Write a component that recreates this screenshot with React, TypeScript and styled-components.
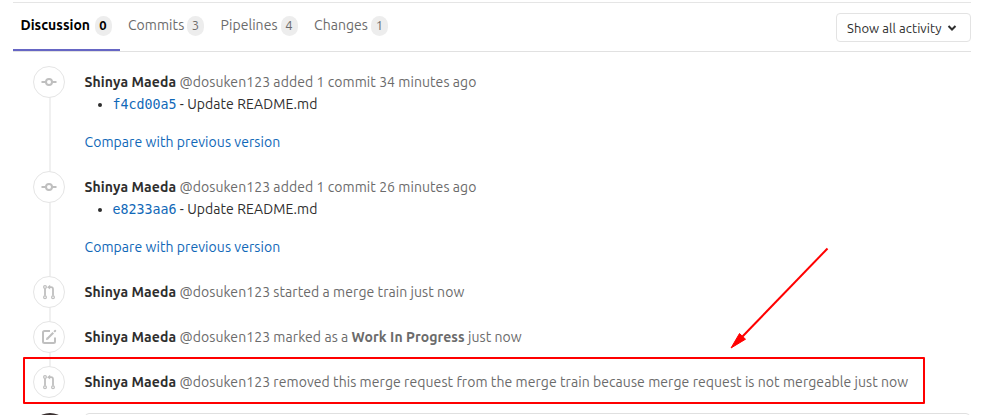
import React from "react";
import styled, { createGlobalStyle, css } from "styled-components";

const GlobalStyle = createGlobalStyle`
  * { box-sizing: border-box; }
  html, body { margin: 0; padding: 0; background: #fff; overflow: hidden; }
`;

const Page = styled.div`
  position: relative;
  width: 993px;
  height: 415px;
  padding: 2px 22px 0 13px;
  overflow: hidden;
  background: #fff;
  color: #2e2e2e;
  font: 14px/22px Ubuntu, "Noto Sans", sans-serif;
`;

const TabBar = styled.nav`
  display: flex;
  height: 50px;
  border-top: 1px solid #e5e5e5;
  border-bottom: 1px solid #e1e1e1;
`;

const Tab = styled.a<{ $active?: boolean; $width: number }>`
  display: flex;
  flex: none;
  align-items: center;
  justify-content: space-between;
  width: ${(p) => p.$width}px;
  height: 48px;
  padding: 0 8px 4px 8.5px;
  color: #6b6b6b;
  white-space: nowrap;
  ${(p) =>
    p.$active &&
    css`
      color: #000;
      font-weight: 700;
      border-bottom: 2px solid #6666c4;
      padding: 0 8px 2px 7.5px;
    `}
`;

const Label = styled.span<{ $spacing?: number }>`
  letter-spacing: ${(p) => p.$spacing ?? 0.068}px;
`;

const Badge = styled.span`
  flex: none;
  width: 17px;
  height: 20px;
  margin-top: 2px;
  border-radius: 10px;
  background: #ededed;
  font-size: 13px;
  line-height: 19px;
  text-align: center;
`;

const Filter = styled.button`
  display: flex;
  align-items: center;
  justify-content: space-between;
  width: 135px;
  height: 29px;
  margin: 10px 0 0 auto;
  padding: 0 13px 0 10px;
  border: 1px solid #e3e3e3;
  border-radius: 4px;
  background: #fff;
  color: #2e2e2e;
  font: 13px/20px Ubuntu, "Noto Sans", sans-serif;
  white-space: nowrap;
`;

const Timeline = styled.ul`
  position: relative;
  margin: 0;
  padding: 14px 0 0 20px;
  list-style: none;

  &::before {
    content: "";
    position: absolute;
    left: 36px;
    top: 20px;
    width: 2px;
    height: 310px;
    background: #f0f0f0;
  }
`;

const Note = styled.li<{ $tall?: boolean }>`
  position: relative;
  display: flex;
  gap: 19.5px;
  height: ${(p) => (p.$tall ? 105 : 45)}px;
`;

const Bullet = styled.div`
  display: flex;
  flex: none;
  align-items: center;
  justify-content: center;
  width: 32px;
  height: 32px;
  border: 1px solid #e5e5e5;
  border-radius: 50%;
  background: #fff;
`;

const Content = styled.div`
  padding-top: 5px;
  color: #6b6b6b;
  white-space: nowrap;
`;

const Author = styled.strong`
  color: #2e2e2e;
  letter-spacing: 0.11px;
`;

const Commits = styled.ul`
  margin: 0 0 16px;
  padding-left: 28px;
  color: #2e2e2e;
  list-style: disc;
`;

const Sha = styled.a`
  color: #1068b8;
  font: 13.3px/20px "DejaVu Sans Mono", monospace;
`;

const Link = styled.a`
  color: #1068b8;
`;

const Composer = styled.div`
  display: flex;
  gap: 15px;
  padding: 2px 1px 0 17px;
`;

const Avatar = styled.div`
  width: 40px;
  height: 40px;
  border-radius: 50%;
  background: #3a3030;
`;

const Editor = styled.div`
  flex: 1;
  height: 40px;
  border: 1px solid #e0e0e0;
  border-radius: 4px;
`;

const Highlight = styled.div`
  position: absolute;
  left: 23px;
  top: 357px;
  width: 902px;
  height: 47px;
  border: 2px solid #f00;
  border-radius: 1px;
`;

const Arrow = styled.svg`
  position: absolute;
  left: 720px;
  top: 240px;
`;

const CommitIcon = () => (
  <svg width="16" height="16" viewBox="0 0 16 16" fill="none" stroke="#bfbfbf" strokeWidth="2">
    <circle cx="8" cy="8" r="3" />
    <path d="M0.5 8H5M11 8h4.5" />
  </svg>
);

const MergeIcon = () => (
  <svg width="16" height="16" viewBox="0 0 16 16" fill="none" stroke="#bfbfbf">
    <g strokeWidth="1.2">
      <circle cx="4" cy="3" r="1.4" />
      <circle cx="4" cy="13.2" r="1.4" />
      <circle cx="12" cy="13.2" r="1.4" />
    </g>
    <path d="M4 4.4v7.4" strokeWidth="1.8" />
    <path d="M8.5 3.2h1.500c1.400 0 2 .8 2 2v6.600" strokeWidth="1.8" />
    <path d="M9.200 0.800v4.800L6 3.200z" fill="#bfbfbf" stroke="none" />
  </svg>
);

const EditIcon = () => (
  <svg width="16" height="16" viewBox="0 0 16 16" fill="none" stroke="#bfbfbf">
    <path d="M9 2H3.5Q2 2 2 3.5v9Q2 14 3.5 14h9q1.5 0 1.5-1.5V8.5" strokeWidth="2" />
    <path d="M6.3 9.7L12.3 3.7" strokeWidth="2" />
    <path d="M5 11l.5-2.4 1.9 1.9zM12.4 2.2l1.2-1.2q.6-.5 1.1 0l.3.3q.5.6 0 1.1l-1.2 1.2z" fill="#bfbfbf" stroke="none" />
  </svg>
);

const tabs = [
  { label: "Discussion", count: 0, width: 106.5, spacing: 0, active: true },
  { label: "Commits", count: 3, width: 92.5, spacing: 0.05 },
  { label: "Pipelines", count: 4, width: 93.5, spacing: 0.06 },
  { label: "Changes", count: 1, width: 90.5, spacing: 0.05 },
];

const commitNotes = [
  { sha: "f4cd00a5", time: "34 minutes ago" },
  { sha: "e8233aa6", time: "26 minutes ago" },
];

export default function App() {
  return (
    <>
      <GlobalStyle />
      <Page>
        <TabBar>
          {tabs.map((t) => (
            <Tab key={t.label} $active={t.active} $width={t.width}>
              <Label $spacing={t.spacing}>{t.label}</Label>
              <Badge>{t.count}</Badge>
            </Tab>
          ))}
          <Filter>
            <Label $spacing={0.08}>Show all activity</Label>
            <svg width="10" height="8" viewBox="0 0 10 8" fill="none" stroke="#2e2e2e" strokeWidth="2">
              <path d="M1.5 2L5 5.5 8.5 2" />
            </svg>
          </Filter>
        </TabBar>
        <Timeline>
          {commitNotes.map((n) => (
            <Note key={n.sha} $tall>
              <Bullet><CommitIcon /></Bullet>
              <Content>
                <Author>Shinya Maeda</Author> <Label>@dosuken123 added 1 commit {n.time}</Label>
                <Commits>
                  <li><Sha>{n.sha}</Sha> <Label>- Update README.md</Label></li>
                </Commits>
                <Link><Label>Compare with previous version</Label></Link>
              </Content>
            </Note>
          ))}
          <Note>
            <Bullet><MergeIcon /></Bullet>
            <Content>
              <Author>Shinya Maeda</Author> <Label>@dosuken123 started a merge train just now</Label>
            </Content>
          </Note>
          <Note>
            <Bullet><EditIcon /></Bullet>
            <Content>
              <Author>Shinya Maeda</Author> <Label>@dosuken123 marked as a <b>Work In Progress</b> just now</Label>
            </Content>
          </Note>
          <Note>
            <Bullet><MergeIcon /></Bullet>
            <Content>
              <Author>Shinya Maeda</Author> <Label>@dosuken123 removed this merge request from the merge train because merge request is not mergeable just now</Label>
            </Content>
          </Note>
        </Timeline>
        <Composer>
          <Avatar />
          <Editor />
        </Composer>
        <Highlight />
        <Arrow width="120" height="115" viewBox="0 0 120 115">
          <path d="M107.5 8.5L22 97" stroke="#f00" strokeWidth="2" fill="none" />
          <path d="M11 108L19.5 93.5 25.5 99.2z" fill="#f00" stroke="#f00" />
        </Arrow>
      </Page>
    </>
  );
}
